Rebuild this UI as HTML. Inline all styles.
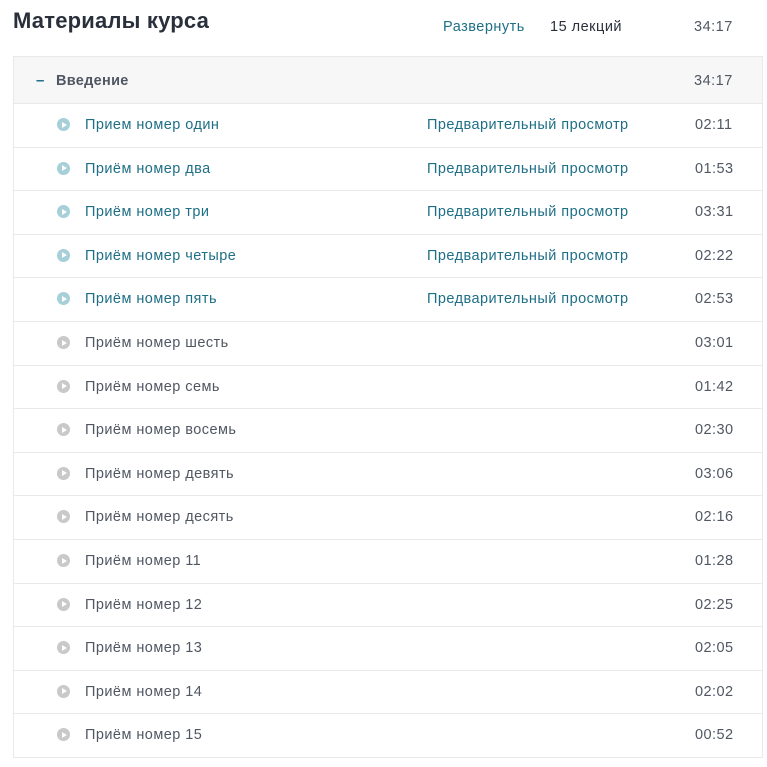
<!DOCTYPE html>
<html><head><meta charset="utf-8"><style>
*{margin:0;padding:0;box-sizing:border-box}
body{width:767px;height:767px;background:#fff;font-family:"Liberation Sans","DejaVu Sans",sans-serif;color:#505763;position:relative;overflow:hidden}
.a{position:absolute;white-space:nowrap;letter-spacing:0.5px}
h1{position:absolute;left:13px;top:8px;font-size:22px;font-weight:600;color:#29303b;letter-spacing:0.2px}
.panel{position:absolute;left:13px;top:56px;width:750px;height:702px;border:1px solid #e8e9eb}
.hdr{position:absolute;left:0;top:0;width:748px;height:47px;background:#f7f7f7;border-bottom:1px solid #e8e9eb}
.row{position:absolute;left:0;width:748px;height:43.6px;border-bottom:1px solid #e8e9eb;font-size:14.5px;letter-spacing:0.45px}
.row span{position:absolute;top:13px}
.ic{position:absolute;left:43px;top:14px;width:13px;height:13px;border-radius:50%}
.ic:after{content:"";position:absolute;left:5px;top:3.5px;border-left:5px solid #fff;border-top:3px solid transparent;border-bottom:3px solid transparent}
.b .ic{background:#a6cfd9}.g .ic{background:#c8c9cb}
.b .t{color:#1e6f86}.g .t{color:#505763}
.t{left:71px}.pv{left:413px;color:#1e6f86}.d{left:681px;color:#505763}
</style></head><body>
<h1>Материалы курса</h1>
<div class="a" style="left:443px;top:19px;font-size:14.5px;color:#1e6f86">Развернуть</div>
<div class="a" style="left:550px;top:19px;font-size:14.5px;color:#29303b">15 лекций</div>
<div class="a" style="left:694px;top:19px;font-size:14.5px;color:#505763">34:17</div>
<div class="panel">
<div class="hdr">
<div class="a" style="left:22px;top:15px;font-size:15px;font-weight:bold;color:#1e6f86">–</div>
<div class="a" style="left:42px;top:16px;font-size:14.5px;font-weight:bold;color:#505763;letter-spacing:0.3px">Введение</div>
<div class="a" style="left:680px;top:16px;font-size:14.5px;color:#505763">34:17</div>
</div>
<div class="row b" style="top:47px"><div class="ic"></div><span class="t">Прием номер один</span><span class="pv">Предварительный просмотр</span><span class="d">02:11</span></div>
<div class="row b" style="top:90.6px"><div class="ic"></div><span class="t">Приём номер два</span><span class="pv">Предварительный просмотр</span><span class="d">01:53</span></div>
<div class="row b" style="top:134.2px"><div class="ic"></div><span class="t">Приём номер три</span><span class="pv">Предварительный просмотр</span><span class="d">03:31</span></div>
<div class="row b" style="top:177.8px"><div class="ic"></div><span class="t">Приём номер четыре</span><span class="pv">Предварительный просмотр</span><span class="d">02:22</span></div>
<div class="row b" style="top:221.4px"><div class="ic"></div><span class="t">Приём номер пять</span><span class="pv">Предварительный просмотр</span><span class="d">02:53</span></div>
<div class="row g" style="top:265px"><div class="ic"></div><span class="t">Приём номер шесть</span><span class="d">03:01</span></div>
<div class="row g" style="top:308.6px"><div class="ic"></div><span class="t">Приём номер семь</span><span class="d">01:42</span></div>
<div class="row g" style="top:352.2px"><div class="ic"></div><span class="t">Приём номер восемь</span><span class="d">02:30</span></div>
<div class="row g" style="top:395.8px"><div class="ic"></div><span class="t">Приём номер девять</span><span class="d">03:06</span></div>
<div class="row g" style="top:439.4px"><div class="ic"></div><span class="t">Приём номер десять</span><span class="d">02:16</span></div>
<div class="row g" style="top:483px"><div class="ic"></div><span class="t">Приём номер 11</span><span class="d">01:28</span></div>
<div class="row g" style="top:526.6px"><div class="ic"></div><span class="t">Приём номер 12</span><span class="d">02:25</span></div>
<div class="row g" style="top:570.2px"><div class="ic"></div><span class="t">Приём номер 13</span><span class="d">02:05</span></div>
<div class="row g" style="top:613.8px"><div class="ic"></div><span class="t">Приём номер 14</span><span class="d">02:02</span></div>
<div class="row g" style="top:657.4px;border-bottom:none"><div class="ic"></div><span class="t">Приём номер 15</span><span class="d">00:52</span></div>
</div>
</body></html>
